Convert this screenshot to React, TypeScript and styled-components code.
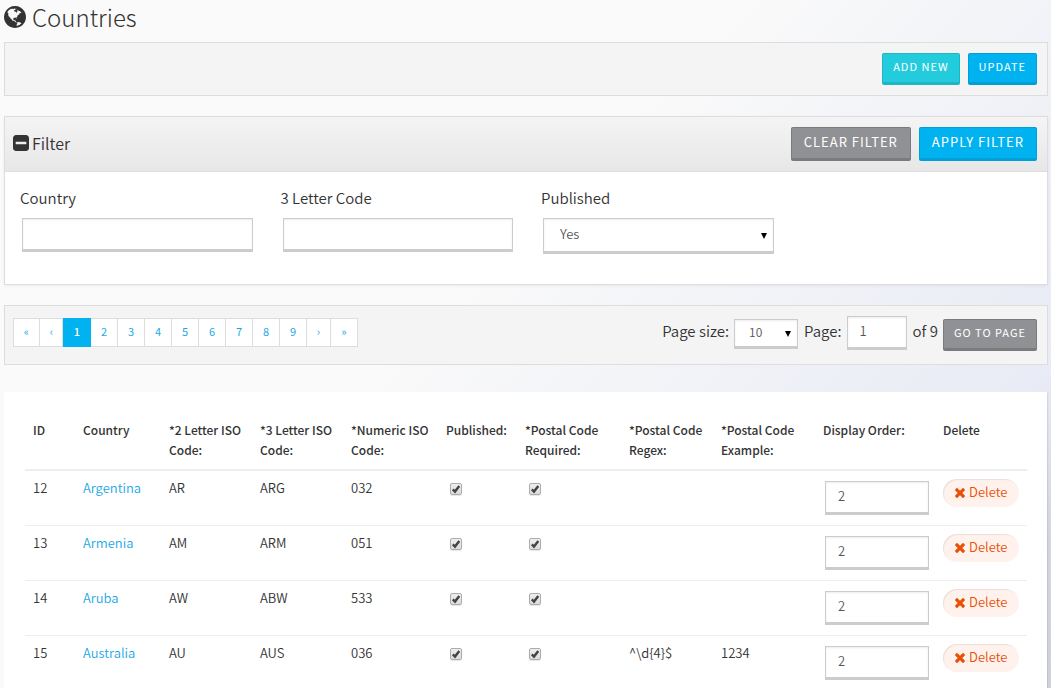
import React from "react";
import styled, { createGlobalStyle, css } from "styled-components";

const sans = `"Noto Sans CJK SC", "Open Sans", sans-serif`;

const GlobalStyle = createGlobalStyle`
  *, *::before, *::after { box-sizing: border-box; }
  html { min-height: 100%; background: #fafafa; }
  body {
    margin: 0;
    color: #333;
    font: 14px/20px ${sans};
  }
  button, input, select { font-family: inherit; margin: 0; }
`;

const Page = styled.main`
  height: 100vh;
  overflow: hidden;
  padding: 0 3px 0 4px;
  background: linear-gradient(135deg, #fafafa 0%, #fafafa 42%, #e8ebf5 82%, #d4d7e2 91%, #d0d3df 100%);
`;

const Title = styled.h1`
  display: flex;
  align-items: center;
  gap: 6px;
  margin: 0 0 8px;
  font-size: 24px;
  line-height: 34px;
  font-weight: 300;
`;

const Panel = styled.section`
  border: 1px solid #ddd;
  background: #f4f4f4;
  margin-bottom: 20px;
`;

const ActionBar = styled(Panel)`
  display: flex;
  justify-content: flex-end;
  gap: 8px;
  padding: 10px;
`;

const FilterPanel = styled(Panel)`
  background: #fff;
  box-shadow: 0 1px 3px rgba(0, 0, 0, 0.06);
`;

const FilterHeader = styled.div`
  display: flex;
  align-items: center;
  justify-content: space-between;
  padding: 10px 10px 10px 8px;
  border-bottom: 1px solid #ddd;
  background: linear-gradient(#f4f4f4, #e7e7e7);
`;

const FilterTitle = styled.h2`
  display: flex;
  align-items: center;
  gap: 3px;
  margin: 0;
  padding-bottom: 3px;
  font-size: 16px;
  line-height: 20px;
  font-weight: 350;
`;

const ButtonGroup = styled.div`
  display: flex;
  gap: 8px;
`;

const tones = {
  teal: ["#23ccdd", "#1fb5c4"],
  blue: ["#00b3f0", "#009fd6"],
  gray: ["#909194", "#7a7b7d"],
};

const Button = styled.button<{ $tone: keyof typeof tones; $large?: boolean }>`
  flex: none;
  border: 1px solid ${(p) => tones[p.$tone][1]};
  border-bottom-width: 3px;
  border-radius: 2px;
  background: ${(p) => tones[p.$tone][0]};
  color: #fff;
  text-transform: uppercase;
  letter-spacing: 1px;
  font-weight: 400;
  white-space: nowrap;
  cursor: pointer;
  ${(p) =>
    p.$large
      ? css`
          height: 34px;
          padding: 0 12px 2px;
          font-size: 13px;
          line-height: 28px;
        `
      : css`
          height: 32px;
          padding: 0 10px 4px;
          font-size: 11px;
          line-height: 24px;
        `}
`;

const Fields = styled.div`
  display: grid;
  grid-template-columns: repeat(4, 1fr);
  padding: 16px 0 30px;
`;

const Field = styled.div`
  display: flex;
  flex-direction: column;
  gap: 10px;
  padding: 0 13px 0 15px;
`;

const Label = styled.label`
  font-size: 15px;
  line-height: 20px;
  font-weight: 350;
`;

const box = css`
  border: 1px solid #ccc;
  border-bottom-width: 3px;
  border-radius: 0;
  background-color: #fff;
  box-shadow: inset 0 1px 2px rgba(0, 0, 0, 0.08);
  color: #555;
  font-size: 13px;
  font-weight: 350;
`;

const TextInput = styled.input`
  ${box}
  width: 100%;
  height: 34px;
  padding: 0 12px 3px;
`;

const Select = styled.select<{ $compact?: boolean }>`
  ${box}
  appearance: none;
  display: block;
  width: 100%;
  height: ${(p) => (p.$compact ? 30 : 36)}px;
  padding: ${(p) => (p.$compact ? "0 14px 3px" : "0 16px 3px")};
  font-size: ${(p) => (p.$compact ? 12 : 13)}px;
  background-image: url("data:image/svg+xml,%3Csvg xmlns='http://www.w3.org/2000/svg' width='6' height='6'%3E%3Cpath d='M0 0h6L3 6z'/%3E%3C/svg%3E");
  background-repeat: no-repeat;
  background-position: right 6px bottom ${(p) => (p.$compact ? 9 : 12)}px;
`;

const FieldControl = styled.div`
  padding: 0 0 0 2px;
`;

const PagerBar = styled(Panel)`
  display: flex;
  justify-content: space-between;
  align-items: flex-start;
  padding: 10px 10px 13px 8px;
  margin-bottom: 27px;
`;

const PageList = styled.nav`
  display: flex;
  margin-top: 2px;
  border: 1px solid #ddd;
  background: #fff;
`;

const PageLink = styled.a<{ $active?: boolean; $arrow?: "first" | "inner" | "last" }>`
  width: ${(p) => (p.$arrow === "inner" ? 24 : p.$arrow === "first" ? 25 : 27)}px;
  height: 27px;
  line-height: 25px;
  font-size: 11px;
  text-align: center;
  text-decoration: none;
  color: #1ba9e4;
  & + & { border-left: 1px solid #ddd; }
  ${(p) =>
    p.$active &&
    css`
      && {
        z-index: 1;
        width: 29px;
        height: 29px;
        margin: -1px -1px -1px -1px;
        line-height: 27px;
        border-color: #00b3f0;
        background: #00b3f0;
        color: #fff;
        font-weight: 500;
      }
    `}
`;

const PageJump = styled.form`
  display: flex;
  align-items: flex-start;
  gap: 5px;
`;

const JumpText = styled.div`
  display: flex;
  padding: 5px 0 0 1px;
`;

const JumpControl = styled.div<{ $width?: number }>`
  width: ${(p) => (p.$width ? `${p.$width}px` : "auto")};
  padding-top: 3px;
  display: flex;
`;

const PageField = styled.div`
  display: flex;
  width: 60px;
`;

const TableCard = styled.section`
  margin-right: 1px;
  padding: 20px 20px 0 21px;
  background: #fff;
  box-shadow: 1px 1px 1px rgba(0, 0, 0, 0.08);
`;

const Table = styled.table`
  width: 100%;
  table-layout: fixed;
  border-collapse: collapse;
  font-size: 13px;
  font-weight: 350;
  line-height: 20px;
`;

const Th = styled.th`
  padding: 8px 8px 9px;
  border-bottom: 2px solid #eee;
  text-align: left;
  vertical-align: top;
  font-size: 12px;
  font-weight: 500;
`;

const Td = styled.td`
  height: 55px;
  padding: 7px 8px 0;
  border-bottom: 1px solid #eee;
  vertical-align: top;
`;

const CountryLink = styled.a`
  color: #1ba9e4;
  text-decoration: none;
`;

const OrderCell = styled.div`
  margin: 0 -2px 0 2px;
  padding-top: 3px;
`;

const Checkbox = styled.input`
  appearance: none;
  display: block;
  width: 12px;
  height: 12px;
  margin: 5px 0 0 4px;
  border: 1px solid #adadad;
  border-radius: 2px;
  background: linear-gradient(#eee, #dcdcdc);
  box-shadow: 0 1px 1px rgba(0, 0, 0, 0.1);
  &:checked {
    background: url("data:image/svg+xml,%3Csvg xmlns='http://www.w3.org/2000/svg' width='10' height='10'%3E%3Cpath d='M1.800 5.400l2.200 2.200L8.300 2' fill='none' stroke='%23444' stroke-width='2.400'/%3E%3C/svg%3E"),
      linear-gradient(#eee, #dcdcdc);
  }
`;

const DeleteButton = styled.button`
  display: flex;
  align-items: center;
  gap: 4px;
  height: 28px;
  margin-top: 1px;
  padding: 0 12px;
  border: 0;
  border-radius: 14px;
  background: #fff2ec;
  box-shadow: inset 1px 1px 1px rgba(0, 0, 0, 0.08);
  color: #e8500a;
  font-size: 13px;
  font-weight: 350;
  line-height: 26px;
  cursor: pointer;
`;

const DeleteText = styled.span`
  padding-bottom: 2px;
`;

const GLOBE =
  "M896 128q209 0 385.5 103t279.5 279.5 103 385.5-103 385.5-279.5 279.5-385.5 103-385.5-103-279.5-279.5-103-385.5 103-385.5 279.5-279.5 385.5-103zm274 521q-2 1-9.5 9.5t-13.5 9.5q2 0 4.5-5t5-11 3.5-7q6-7 22-15 14-6 52-12 34-8 51 11-2-2 9.5-13t14.5-12q3-2 15-4.5t15-7.5l2-22q-12 1-17.5-7t-6.5-21q0 2-6 8 0-7-4.5-8t-11.5 1-9 1q-10-3-15-7.5t-8-16.5-4-15q-2-5-9.5-11t-9.5-10q-1-2-2.5-5.5t-3-6.5-4-5.5-5.5-2.5-7 5-7.5 10-4.5 5q-3-2-6-1.500t-4.500 1-4.500 3-5 3.500q-3 2-8.500 3t-8.500 2q15-5-1-11-10-4-16-3 9-4 7.500-12t-8.500-14h5q-1-4-8.500-8.500t-17.500-8.500-13-6q-8-5-34-9.500t-33-.5q-5 6-4.500 10.500t4 14 3.500 12.500q1 6-5.500 13t-6.500 12q0 7 14 15.500t10 21.500q-3 8-16 16t-16 12q-5 8-1.500 18.500t10.500 16.500q2 2 1.500 4t-3.500 4.500-5.500 4-6.500 3.500l-3 2q-11 5-20.500-6t-13.500-26q-7-25-16-30-23-8-29 1-5-13-41-26-25-9-58-4 6-1 0-15-7-15-19-12 3-6 4-17.500t1-13.500q3-13 12-23 1-1 7-8.500t9.500-13.500.5-6q35 4 50-11 5-5 11.500-17t10.500-17q9-6 14-5.500t14.500 5.500 14.500 5q14 1 15.500-11t-7.500-20q12 1 3-17-4-7-8-9-12-4-27 5-8 4 2 8-1-1-9.500 10.500t-16.500 17.500-16-5q-1-1-5.500-13.500t-9.500-13.500q-8 0-16 15 3-8-11-15t-24-8q19-12-8-27-7-4-20.500-5t-19.500 4q-5 7-5.500 11.500t5 8 10.500 5.500 11.500 4 8.500 3q14 10 8 14-2 1-8.500 3.500t-11.500 4.500-6 4q-3 4 0 14t-2 14q-5-5-9-17.500t-7-16.500q7 9-25 6l-10-1q-4 0-16 2t-20.500 1-13.500-8q-4-8 0-20 1-4 4-2-4-3-11-9.500t-10-8.500q-46 15-94 41 6 1 12-1 5-2 13-6.500t10-5.500q34-14 42-7l5-5q14 16 20 25-7-4-30-1-20 6-22 12 7 12 5 18-4-3-11.500-10t-14.500-11-15-5q-16 0-22 1-146 80-235 222 7 7 12 8 4 1 5 9t2.500 11 11.500-3q9 8 3 19 1-1 44 27 19 17 21 21 3 11-10 18-1-2-9-9t-9-4q-3 5 .5 18.500t10.500 12.500q-7 0-9.500 16t-2.500 35.500-1 23.500l2 1q-3 12 5.500 34.500t21.500 19.500q-13 3 20 43 6 8 8 9 3 2 12 7.500t15 10 10 10.500q4 5 10 22.500t14 23.500q-2 6 9.500 20t10.500 23q-1 0-2.500 1t-2.500 1q3 7 15.500 14t15.500 13q1 3 2 10t3 11 8 2q2-20-24-62-15-25-17-29-3-5-5.500-15.500t-4.500-14.500q2 0 6 1.500t8.500 3.500 7.500 4 2 3q-3 7 2 17.500t12 18.500 17 19 12 13q6 6 14 19.500t0 13.500q9 0 20 10.500t17 19.500q5 8 8 26t5 24q2 7 8.500 13.500t12.500 9.500l16 8 13 7q5 2 18.500 10.500t21.500 11.500q10 4 16 4t14.500-2.500 13.500-3.500q15-2 29 15t21 21q36 19 55 11-2 1 .5 7.500t8 15.500 9 14.500 5.500 8.500q5 6 18 15t18 15q6-4 7-9-3 8 7 20t18 10q14-3 14-32-31 15-49-18 0-1-2.500-5.500t-4-8.500-2.500-8.500 0-7.500 5-3q9 0 10-3.500t-2-12.500-4-13q-1-8-11-20t-12-15q-5 9-16 8t-16-9q0 1-1.500 5.500t-1.500 6.500q-13 0-15-1 1-3 2.500-17.500t3.500-22.500q1-4 5.500-12t7.500-14.500 4-12.500-4.500-9.500-17.500-2.500q-19 1-26 20-1 3-3 10.500t-5 11.500-9 7q-7 3-24 2t-24-5q-13-8-22.500-29t-9.500-37q0-10 2.500-26.500t3-25-5.500-24.500q3-2 9-9.500t10-10.500q2-1 4.500-1.500t4.500 0 4-1.500 3-6q-1-1-4-3-3-3-4-3 7 3 28.500-1.500t27.500 1.500q15 11 22-2 0-1-2.500-9.500t-.5-13.500q5 27 29 9 3 3 15.500 5t17.500 5q3 2 7 5.500t5.500 4.500 5-.5 8.500-6.500q10 14 12 24 11 40 19 44 7 3 11 2t4.500-9.500 0-14-1.500-12.500l-1-8v-18l-1-8q-15-3-18.500-12t1.500-18.500 15-18.500q1-1 8-3.500t15.500-6.500 12.500-8q21-19 15-35 7 0 11-9-1 0-5-3t-7.500-5-4.500-2q9-5 2-16 5-3 7.500-11t7.500-10q9 12 21 2 8-8 1-16 5-7 20.500-10.500t18.500-9.500q7 2 8-2t1-12 3-12q4-5 15-9t13-5l17-11q3-4 0-4 18 2 31-11 10-11-6-20 3-6-3-9.500t-15-5.500q3-1 11.500-.5t10.500-1.500q15-10-7-16-17-5-43 12zm-163 877q206-36 351-189-3-3-12.500-4.500t-12.500-3.500q-18-7-24-8 1-7-2.500-13t-8-9-12.500-8-11-7q-2-2-7-6t-7-5.500-7.500-4.500-8.500-2-10 1l-3 1q-3 1-5.500 2.500t-5.500 3-4 3 0 2.500q-21-17-36-22-5-1-11-5.500t-10.500-7-10-1.500-11.500 7q-5 5-6 15t-2 13q-7-5 0-17.500t2-18.500q-3-6-10.500-4.500t-12 4.500-11.500 8.500-9 6.500-8.500 5.500-8.500 7.500q-3 4-6 12t-5 11q-2-4-11.500-6.500t-9.500-5.500q2 10 4 35t5 38q7 31-12 48-27 25-29 40-4 22 12 26 0 7-8 20.500t-7 21.500q0 6 2 16z";
const MINUS_SQUARE =
  "M1408 960v-128q0-26-19-45t-45-19h-896q-26 0-45 19t-19 45v128q0 26 19 45t45 19h896q26 0 45-19t19-45zm256-544v960q0 119-84.5 203.5t-203.5 84.5h-960q-119 0-203.5-84.5t-84.5-203.5v-960q0-119 84.5-203.5t203.5-84.5h960q119 0 203.5 84.5t84.5 203.5z";
const TIMES =
  "M1490 1322q0 40-28 68l-136 136q-28 28-68 28t-68-28l-294-294-294 294q-28 28-68 28t-68-28l-136-136q-28-28-28-68t28-68l294-294-294-294q-28-28-28-68t28-68l136-136q28-28 68-28t68 28l294 294 294-294q28-28 68-28t68 28l136 136q28 28 28 68t-28 68l-294 294 294 294q28 28 28 68z";

function Icon({ d, size, viewBox = "128 128 1536 1536" }: { d: string; size: number; viewBox?: string }) {
  return (
    <svg width={size} height={size} viewBox={viewBox} fill="currentColor" aria-hidden="true">
      <path d={d} />
    </svg>
  );
}

const columns: [string, number | undefined][] = [
  ["ID", 50],
  ["Country", 86],
  ["*2 Letter ISO Code:", 91],
  ["*3 Letter ISO Code:", 91],
  ["*Numeric ISO Code:", 95],
  ["Published:", 79],
  ["*Postal Code Required:", 104],
  ["*Postal Code Regex:", 92],
  ["*Postal Code Example:", 102],
  ["Display Order:", 120],
  ["Delete", undefined],
];

const countries = [
  { id: 12, name: "Argentina", two: "AR", three: "ARG", numeric: "032", regex: "", example: "" },
  { id: 13, name: "Armenia", two: "AM", three: "ARM", numeric: "051", regex: "", example: "" },
  { id: 14, name: "Aruba", two: "AW", three: "ABW", numeric: "533", regex: "", example: "" },
  { id: 15, name: "Australia", two: "AU", three: "AUS", numeric: "036", regex: "^\\d{4}$", example: "1234" },
];

export default function App() {
  return (
    <>
      <GlobalStyle />
      <Page>
        <Title>
          <Icon d={GLOBE} size={22} />
          Countries
        </Title>

        <ActionBar>
          <Button type="button" $tone="teal">Add new</Button>
          <Button type="button" $tone="blue">Update</Button>
        </ActionBar>

        <FilterPanel>
          <FilterHeader>
            <FilterTitle>
              <Icon d={MINUS_SQUARE} size={16} />
              Filter
            </FilterTitle>
            <ButtonGroup>
              <Button type="button" $tone="gray" $large>Clear filter</Button>
              <Button type="button" $tone="blue" $large>Apply filter</Button>
            </ButtonGroup>
          </FilterHeader>
          <Fields>
            <Field>
              <Label htmlFor="country">Country</Label>
              <FieldControl><TextInput id="country" /></FieldControl>
            </Field>
            <Field>
              <Label htmlFor="code">3 Letter Code</Label>
              <FieldControl><TextInput id="code" /></FieldControl>
            </Field>
            <Field>
              <Label htmlFor="published">Published</Label>
              <FieldControl>
                <Select id="published" defaultValue="Yes">
                  <option>Yes</option>
                  <option>No</option>
                </Select>
              </FieldControl>
            </Field>
          </Fields>
        </FilterPanel>

        <PagerBar>
          <PageList aria-label="Pages">
            <PageLink href="#first" $arrow="first">«</PageLink>
            <PageLink href="#prev" $arrow="inner">‹</PageLink>
            {[1, 2, 3, 4, 5, 6, 7, 8, 9].map((n) => (
              <PageLink key={n} href={`#page-${n}`} $active={n === 1}>{n}</PageLink>
            ))}
            <PageLink href="#next" $arrow="inner">›</PageLink>
            <PageLink href="#last" $arrow="last">»</PageLink>
          </PageList>
          <PageJump onSubmit={(e) => e.preventDefault()}>
            <JumpText><Label htmlFor="page-size">Page size:</Label></JumpText>
            <JumpControl $width={64}>
              <Select id="page-size" $compact defaultValue="10">
                <option>10</option>
                <option>20</option>
                <option>50</option>
              </Select>
            </JumpControl>
            <JumpText><Label htmlFor="page">Page:</Label></JumpText>
            <PageField><TextInput id="page" defaultValue="1" /></PageField>
            <JumpText><Label as="span">of 9</Label></JumpText>
            <JumpControl>
              <Button type="submit" $tone="gray">Go to page</Button>
            </JumpControl>
          </PageJump>
        </PagerBar>

        <TableCard>
          <Table>
            <colgroup>
              {columns.map(([name, width]) => (
                <col key={name} width={width} />
              ))}
            </colgroup>
            <thead>
              <tr>
                {columns.map(([name]) => (
                  <Th key={name} scope="col">{name}</Th>
                ))}
              </tr>
            </thead>
            <tbody>
              {countries.map((c) => (
                <tr key={c.id}>
                  <Td>{c.id}</Td>
                  <Td><CountryLink href={`#country-${c.id}`}>{c.name}</CountryLink></Td>
                  <Td>{c.two}</Td>
                  <Td>{c.three}</Td>
                  <Td>{c.numeric}</Td>
                  <Td><Checkbox type="checkbox" defaultChecked aria-label={`${c.name} published`} /></Td>
                  <Td><Checkbox type="checkbox" defaultChecked aria-label={`${c.name} postal code required`} /></Td>
                  <Td>{c.regex}</Td>
                  <Td>{c.example}</Td>
                  <Td>
                    <OrderCell><TextInput defaultValue="2" aria-label={`${c.name} display order`} /></OrderCell>
                  </Td>
                  <Td>
                    <DeleteButton type="button">
                      <Icon d={TIMES} size={10} viewBox="302 366 1188 1188" />
                      <DeleteText>Delete</DeleteText>
                    </DeleteButton>
                  </Td>
                </tr>
              ))}
            </tbody>
          </Table>
        </TableCard>
      </Page>
    </>
  );
}
